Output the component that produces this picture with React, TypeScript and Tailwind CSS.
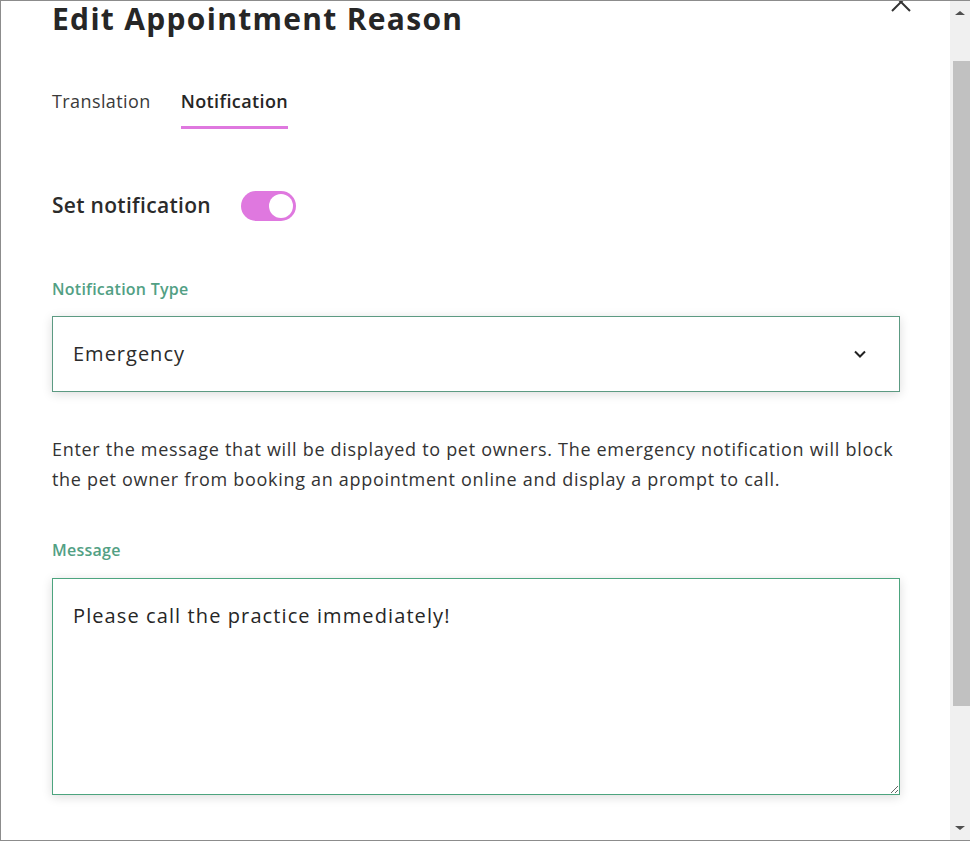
import { useState } from "react";

const font = { fontFamily: "'Open Sans', 'Noto Sans', sans-serif" };

function Toggle({ on, onChange }: { on: boolean; onChange: (v: boolean) => void }) {
    return (
        <button
            type="button"
            onClick={() => onChange(!on)}
            className={`flex h-[30px] w-[55px] items-center rounded-full px-[3px] transition ${
                on ? "justify-end bg-[#df78df]" : "justify-start bg-gray-300"
            }`}>
            <span className="h-[24px] w-[24px] rounded-full bg-white" />
        </button>
    );
}

function Scrollbar() {
    return (
        <div className="flex w-[20px] shrink-0 flex-col items-center bg-[#f0f0f0]">
            <div className="flex h-[24px] items-center justify-center">
                <span className="h-0 w-0 border-x-[5px] border-b-[4px] border-x-transparent border-b-[#505050]" />
            </div>
            <div className="mt-[36px] h-[645px] w-[17px] self-end bg-[#c1c1c1]" />
            <div className="flex-1" />
            <div className="flex h-[24px] items-center justify-center">
                <span className="h-0 w-0 border-x-[5px] border-t-[4px] border-x-transparent border-t-[#505050]" />
            </div>
        </div>
    );
}

export default function App() {
    const [tab, setTab] = useState("notification");
    const [on, setOn] = useState(true);
    const [message, setMessage] = useState("Please call the practice immediately!");

    return (
        <div
            className="flex h-[841px] w-[970px] overflow-hidden border border-r-0 border-[#8c8c8c] bg-white text-[#2b2b2b]"
            style={font}>
            <div className="relative min-w-0 flex-1 overflow-hidden pl-[51px] pr-[50px]">
                <button type="button" className="absolute left-[889px] top-[-10px] text-[#333]" aria-label="Close">
                    <svg width="22" height="22" viewBox="0 0 22 22" fill="none" stroke="currentColor" strokeWidth="2">
                        <path d="M2 2l18 18M20 2L2 20" />
                    </svg>
                </button>

                <h1 className="mt-[-2px] text-[30px] font-bold leading-[40px] tracking-[1.3px] text-[#262626]">
                    Edit Appointment Reason
                </h1>

                <div className="mt-[50px] flex gap-[30px] text-[18px] leading-[24px] tracking-[0.4px]">
                    {[
                        { id: "translation", label: "Translation" },
                        { id: "notification", label: "Notification" },
                    ].map((t) => (
                        <button
                            key={t.id}
                            type="button"
                            onClick={() => setTab(t.id)}
                            className={`border-b-[3px] pb-[13px] ${
                                tab === t.id
                                    ? "border-[#df78df] font-semibold text-[#262626]"
                                    : "border-transparent text-[#3a3a3a]"
                            }`}>
                            {t.label}
                        </button>
                    ))}
                </div>

                <div className="mt-[61px] flex items-center gap-[30px]">
                    <span className="text-[21px] font-semibold tracking-[0.3px]">Set notification</span>
                    <Toggle on={on} onChange={setOn} />
                </div>

                <label className="mt-[56px] block text-[16px] font-semibold leading-[22px] tracking-[0.25px] text-[#52a084]">
                    Notification Type
                </label>
                <div className="mt-[16px] flex h-[76px] items-center justify-between border border-[#5c9a82] bg-white pl-[20px] pr-[32px] shadow-[0_2px_10px_rgba(0,0,0,0.14)]">
                    <span className="text-[20px] tracking-[1px]">Emergency</span>
                    <svg width="14" height="14" viewBox="0 0 14 14" fill="none" stroke="#222" strokeWidth="2">
                        <path d="M2 4.5l5 5 5-5" />
                    </svg>
                </div>

                <p className="mt-[42px] text-[18px] leading-[30px] tracking-[0.7px] text-[#333]">
                    Enter the message that will be displayed to pet owners. The emergency notification will block
                    the pet owner from booking an appointment online and display a prompt to call.
                </p>

                <label className="mt-[45px] block text-[16px] font-semibold leading-[22px] tracking-[0.25px] text-[#52a084]">
                    Message
                </label>
                <textarea
                    value={message}
                    onChange={(e) => setMessage(e.target.value)}
                    className="mt-[17px] block h-[217px] w-full resize-y border border-[#4ca47e] px-[20px] py-[22px] text-[20px] leading-[30px] tracking-[1.1px] text-[#262626] shadow-[0_2px_10px_rgba(0,0,0,0.14)] outline-none"
                    style={font}
                />
            </div>
            <Scrollbar />
        </div>
    );
}
